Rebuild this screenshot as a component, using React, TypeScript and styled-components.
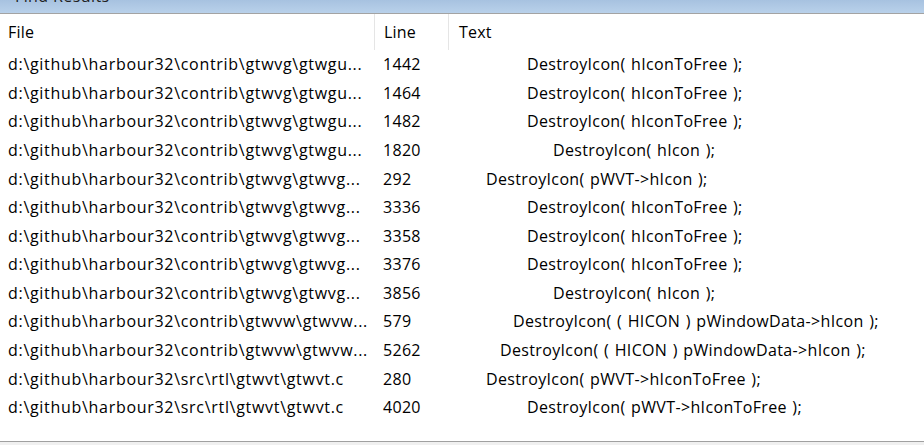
import React from 'react';
import styled, { createGlobalStyle } from 'styled-components';

const GlobalStyle = createGlobalStyle`
  html, body {
    margin: 0;
    padding: 0;
    background: #ffffff;
  }
  body {
    font-family: 'Open Sans', 'Noto Sans', 'Liberation Sans', sans-serif;
    color: #000000;
  }
`;

const Panel = styled.div`
  width: 924px;
  height: 445px;
  display: flex;
  flex-direction: column;
  background: #ffffff;
  overflow: hidden;
`;

const TitleBar = styled.div`
  height: 13px;
  flex: none;
  overflow: hidden;
  background: linear-gradient(to bottom, #a7c2e0, #b9d1ea);
  border-bottom: 1px solid #a3a3a3;
  box-sizing: content-box;

  span {
    display: block;
    margin-top: -14px;
    padding-left: 15px;
    font-size: 16px;
    line-height: 20px;
    letter-spacing: 0.4px;
    color: #1e1e1e;
  }
`;

const Grid = styled.div`
  display: grid;
  grid-template-columns: 374px 74px 1fr;
`;

const HeaderCell = styled.div<{ $pad: number; $sep?: boolean }>`
  height: 36px;
  display: flex;
  align-items: center;
  padding-left: ${(p) => p.$pad}px;
  font-size: 16px;
  letter-spacing: 0.2px;
  border-left: ${(p) => (p.$sep ? '1px solid #e5e5e5' : 'none')};
`;

const Body = styled.div`
  flex: 1;
  display: flex;
  flex-direction: column;
`;

const Row = styled.div`
  display: grid;
  grid-template-columns: 374px 74px 1fr;
  height: 28.58px;
  align-items: center;
  font-size: 16px;
  white-space: nowrap;
`;

const Cell = styled.div<{ $pad: number; $spacing: number; $words?: number }>`
  padding-left: ${(p) => p.$pad}px;
  letter-spacing: ${(p) => p.$spacing}px;
  word-spacing: ${(p) => p.$words ?? 0}px;
  overflow: hidden;
`;

const Footer = styled.div`
  margin-top: auto;
  height: 3px;
  border-top: 1px solid #a0a0a0;
  background: #f0f0f0;
`;

const rows = [
  { file: 'd:\\github\\harbour32\\contrib\\gtwvg\\gtwgu...', line: '1442', x: 527, text: 'DestroyIcon( hIconToFree );' },
  { file: 'd:\\github\\harbour32\\contrib\\gtwvg\\gtwgu...', line: '1464', x: 527, text: 'DestroyIcon( hIconToFree );' },
  { file: 'd:\\github\\harbour32\\contrib\\gtwvg\\gtwgu...', line: '1482', x: 527, text: 'DestroyIcon( hIconToFree );' },
  { file: 'd:\\github\\harbour32\\contrib\\gtwvg\\gtwgu...', line: '1820', x: 553, text: 'DestroyIcon( hIcon );' },
  { file: 'd:\\github\\harbour32\\contrib\\gtwvg\\gtwvg...', line: '292', x: 486, text: 'DestroyIcon( pWVT->hIcon );' },
  { file: 'd:\\github\\harbour32\\contrib\\gtwvg\\gtwvg...', line: '3336', x: 527, text: 'DestroyIcon( hIconToFree );' },
  { file: 'd:\\github\\harbour32\\contrib\\gtwvg\\gtwvg...', line: '3358', x: 527, text: 'DestroyIcon( hIconToFree );' },
  { file: 'd:\\github\\harbour32\\contrib\\gtwvg\\gtwvg...', line: '3376', x: 527, text: 'DestroyIcon( hIconToFree );' },
  { file: 'd:\\github\\harbour32\\contrib\\gtwvg\\gtwvg...', line: '3856', x: 553, text: 'DestroyIcon( hIcon );' },
  { file: 'd:\\github\\harbour32\\contrib\\gtwvw\\gtwvw...', line: '579', x: 513, text: 'DestroyIcon( ( HICON ) pWindowData->hIcon );' },
  { file: 'd:\\github\\harbour32\\contrib\\gtwvw\\gtwvw...', line: '5262', x: 500, text: 'DestroyIcon( ( HICON ) pWindowData->hIcon );' },
  { file: 'd:\\github\\harbour32\\src\\rtl\\gtwvt\\gtwvt.c', line: '280', x: 486, text: 'DestroyIcon( pWVT->hIconToFree );' },
  { file: 'd:\\github\\harbour32\\src\\rtl\\gtwvt\\gtwvt.c', line: '4020', x: 527, text: 'DestroyIcon( pWVT->hIconToFree );' },
];

const App = () => {
  return (
    <Panel>
      <GlobalStyle />
      <TitleBar>
        <span>Find Results</span>
      </TitleBar>
      <Grid>
        <HeaderCell $pad={8}>File</HeaderCell>
        <HeaderCell $pad={9} $sep>Line</HeaderCell>
        <HeaderCell $pad={10} $sep>Text</HeaderCell>
      </Grid>
      <Body>
        {rows.map((r, i) => (
          <Row key={i}>
            <Cell $pad={8} $spacing={0.7}>{r.file}</Cell>
            <Cell $pad={9} $spacing={0.3}>{r.line}</Cell>
            <Cell $pad={r.x - 448} $spacing={0.35} $words={1}>{r.text}</Cell>
          </Row>
        ))}
        <Footer />
      </Body>
    </Panel>
  );
};

export default App;
